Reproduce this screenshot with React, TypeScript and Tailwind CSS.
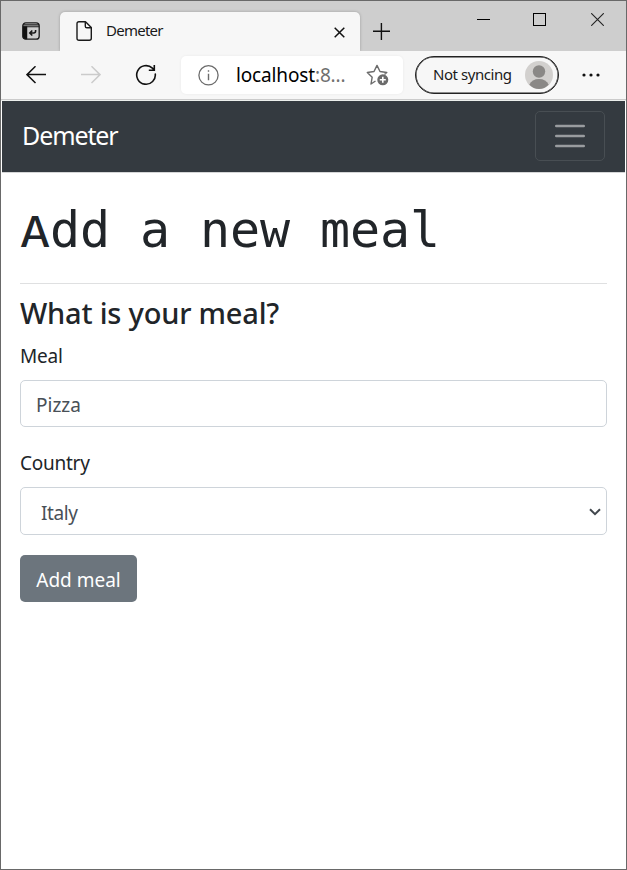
import React from 'react';

const ui = "font-['Noto_Sans',sans-serif]";

function TabActionsIcon() {
  return (
    <svg width="18" height="18" viewBox="0 0 18 18" fill="none" stroke="#1a1a1a">
      <rect x="0.8" y="0.8" width="16.4" height="16.4" rx="3" strokeWidth="1.3" />
      <path d="M1 2.9H17M1 4.7H17" strokeWidth="1.1" />
      <path d="M1 4.5H5V17H3.5Q1 17 1 14.5Z" fill="#111" strokeWidth="0.5" />
      <path d="M13.6 8V9Q13.6 11 11.6 11H8M10.3 8.5L7.8 11L10.3 13.5" strokeWidth="1.6" />
    </svg>
  );
}

function PageIcon() {
  return (
    <svg width="17" height="20" viewBox="0 0 17 20" fill="none" stroke="#1a1a1a" strokeWidth="1.4" strokeLinejoin="round">
      <path d="M3 0.8H9.5L15.3 6.6V17.2Q15.3 19.2 13.3 19.2H3Q1 19.2 1 17.2V2.8Q1 0.8 3 0.8Z" />
      <path d="M9.3 1V5.2Q9.3 6.8 10.9 6.8H15" />
    </svg>
  );
}

function TabStrip() {
  return (
    <div className="flex h-[50px] bg-[#cecece]">
      <div className="flex h-[50px] w-[59px] items-start rounded-br-[5px] bg-[#cecece] pl-[21px] pt-[21px]">
        <TabActionsIcon />
      </div>
      <div className="mt-[11px] flex h-[39px] w-[300px] items-start rounded-t-[5px] bg-[#f7f7f7] pl-[16px] shadow-[0_0_3px_rgba(0,0,0,0.25)]">
        <div className="mt-[9px] w-[30px]"><PageIcon /></div>
        <span className="mt-[7px] w-[228px] text-[15px] leading-[22px] tracking-[-0.75px] text-[#1a1a1a]">Demeter</span>
        <svg className="mt-[15px]" width="11" height="11" viewBox="0 0 11 11" stroke="#111" strokeWidth="1.5"><path d="M0.7 0.7L10.3 10.3M10.3 0.7L0.7 10.3" /></svg>
      </div>
      <svg className="ml-[13px] mt-[21px]" width="18" height="18" viewBox="0 0 18 18" stroke="#111" strokeWidth="1.4"><path d="M0 9.3H17M8.4 1V18" /></svg>
      <svg className="ml-[86px] mt-[12px]" width="13" height="13" viewBox="0 0 13 13" stroke="#000" shapeRendering="crispEdges"><path d="M0 6.5H13" /></svg>
      <svg className="ml-[43px] mt-[12px]" width="13" height="13" viewBox="0 0 13 13" fill="none" stroke="#000" shapeRendering="crispEdges"><rect x="0.5" y="0.5" width="12" height="12" /></svg>
      <svg className="ml-[45px] mt-[12px]" width="13" height="13" viewBox="0 0 13 13" stroke="#222" strokeWidth="1.1"><path d="M0.2 0.2L12.8 12.8M12.8 0.2L0.2 12.8" /></svg>
    </div>
  );
}

function Toolbar() {
  return (
    <div className="flex h-[48px] items-center bg-[#f7f7f7]">
      <svg className="ml-[25px]" width="20" height="18" viewBox="0 0 20 18" fill="none" stroke="#111" strokeWidth="1.5"><path d="M20 8.6H1M9.5 0.3L1 8.6L9.5 17" /></svg>
      <svg className="ml-[35px]" width="20" height="18" viewBox="0 0 20 18" fill="none" stroke="#cbcbcb" strokeWidth="1.5"><path d="M0 8.6H19M10.5 0.3L19 8.6L10.5 17" /></svg>
      <svg className="ml-[34px]" width="22" height="22" viewBox="0 0 22 22" fill="none" stroke="#111" strokeWidth="1.6"><path d="M20.2 9.5A9.3 9.3 0 1 1 17.4 4.2L19.3 6M19.3 1V6.2H13.8" /></svg>
      <div className="ml-[24px] flex h-[38px] w-[222px] items-center rounded-[5px] bg-white shadow-[0_0_3px_rgba(0,0,0,0.06)]">
        <svg className="ml-[17px]" width="21" height="21" viewBox="0 0 21 21" fill="none" stroke="#6b6b6b" strokeWidth="1.3"><circle cx="10.5" cy="10.3" r="9.6" /><path d="M10.5 8.8V15.3M10.5 5.3V6.8" strokeWidth="1.4" /></svg>
        <span className="ml-[17px] w-[130px] whitespace-nowrap text-[19px] leading-[28px] tracking-[-0.15px] text-black">localhost<span className="text-[#6f6f6f]">:8...</span></span>
        <svg width="24" height="22" viewBox="0 0 24 22" fill="none" stroke="#6b6b6b" strokeWidth="1.4" strokeLinejoin="round">
          <path d="M9.5 17L5 20L6.2 13.2L1.3 8.5L8 7.5L11 1.4L14 7.5L20.8 8.5L18.5 10.5" />
          <circle cx="16.8" cy="15.8" r="5.5" fill="#6b6b6b" stroke="none" />
          <path d="M13.8 15.8H19.8M16.8 12.8V18.8" stroke="#fff" strokeWidth="1.6" />
        </svg>
      </div>
      <div className="ml-[12px] flex h-[38px] w-[144px] items-center rounded-full border-[1.5px] border-[#222] pl-[17px] shadow-[inset_0_0_0_0.5px_#222]">
        <span className="-mt-[2px] w-[92px] whitespace-nowrap text-[15px] leading-[22px] tracking-[-0.45px] text-[#1a1a1a]">Not syncing</span>
        <svg width="28" height="28" viewBox="0 0 28 28"><circle cx="14" cy="14" r="14" fill="#d2d0ce" /><circle cx="14" cy="10.5" r="6.2" fill="#8a8886" /><path d="M4.3 23.8Q7 18 14 18Q21 18 23.7 23.8Q19.5 28 14 28Q8.5 28 4.3 23.8Z" fill="#8a8886" /></svg>
      </div>
      <svg className="ml-[23px]" width="18" height="4" viewBox="0 0 18 4" fill="#111"><circle cx="2" cy="2" r="1.6" /><circle cx="9" cy="2" r="1.6" /><circle cx="16" cy="2" r="1.6" /></svg>
    </div>
  );
}

function Navbar() {
  return (
    <nav className="mx-px flex h-[71px] items-center justify-between bg-[#343a40] pb-[2px] pl-[20px] pr-[20px]">
      <span className="pb-[2px] text-[25px] leading-[38px] tracking-[-1.1px] text-white">Demeter</span>
      <button aria-label="Toggle navigation" className="flex h-[50px] w-[70px] items-center justify-center rounded-[5px] border border-[#484e53]">
        <svg width="30" height="24" viewBox="0 0 30 24" stroke="#999c9f" strokeWidth="2.4" strokeLinecap="round"><path d="M1.2 2H28.8M1.2 12H28.8M1.2 22H28.8" /></svg>
      </button>
    </nav>
  );
}

export default function App() {
  return (
    <div className={`${ui} flex h-[870px] w-[627px] flex-col border border-[#696969] bg-white text-[#212529]`}>
      <TabStrip />
      <Toolbar />
      <div className="h-[2px] shrink-0 border-t border-[#cbcbcb] bg-[#ecefed]" />
      <Navbar />
      <div className="mx-px h-px bg-[#d5d6d7]" />
      <main className="px-[19px] pt-[27px]">
        <h1 className="flex h-[60px] whitespace-pre font-['DejaVu_Sans_Mono',monospace] text-[50px] leading-[60px] tracking-[-0.1px]">
          <span className="origin-[50%_79%] scale-y-[0.86]">A</span>
          <span>dd a new meal</span>
        </h1>
        <div className="mt-[23px] h-px bg-[#dfe0e1]" />
        <h3 className="mt-[11px] text-[29px] font-medium leading-[36px] tracking-[-0.2px]">What is your meal?</h3>
        <form>
          <label className="mt-[10px] block text-[19px] leading-[30px] tracking-[-0.2px]">Meal</label>
          <div className="mt-[9px] flex h-[47px] items-center rounded-[5px] border border-[#ced4da] px-[15px] pt-[4px] text-[19px] text-[#495057]">Pizza</div>
          <label className="mt-[21px] block text-[19px] leading-[30px] tracking-[-0.25px]">Country</label>
          <div className="mt-[9px] flex h-[48px] items-center justify-between rounded-[5px] border border-[#ced4da] pl-[20px] pr-[5px] pt-[4px] text-[19px] tracking-[-0.4px] text-[#495057]">
            <span>Italy</span>
            <svg className="-mt-[3px]" width="12" height="8" viewBox="0 0 12 8" fill="none" stroke="#41474d" strokeWidth="2"><path d="M1 1.2L6 6.2L11 1.2" /></svg>
          </div>
          <button type="button" className="mt-[20px] flex h-[47px] w-[117px] items-center justify-center whitespace-nowrap rounded-[5px] bg-[#6c757d] pt-[4px] text-[19px] text-white">Add meal</button>
        </form>
      </main>
    </div>
  );
}
